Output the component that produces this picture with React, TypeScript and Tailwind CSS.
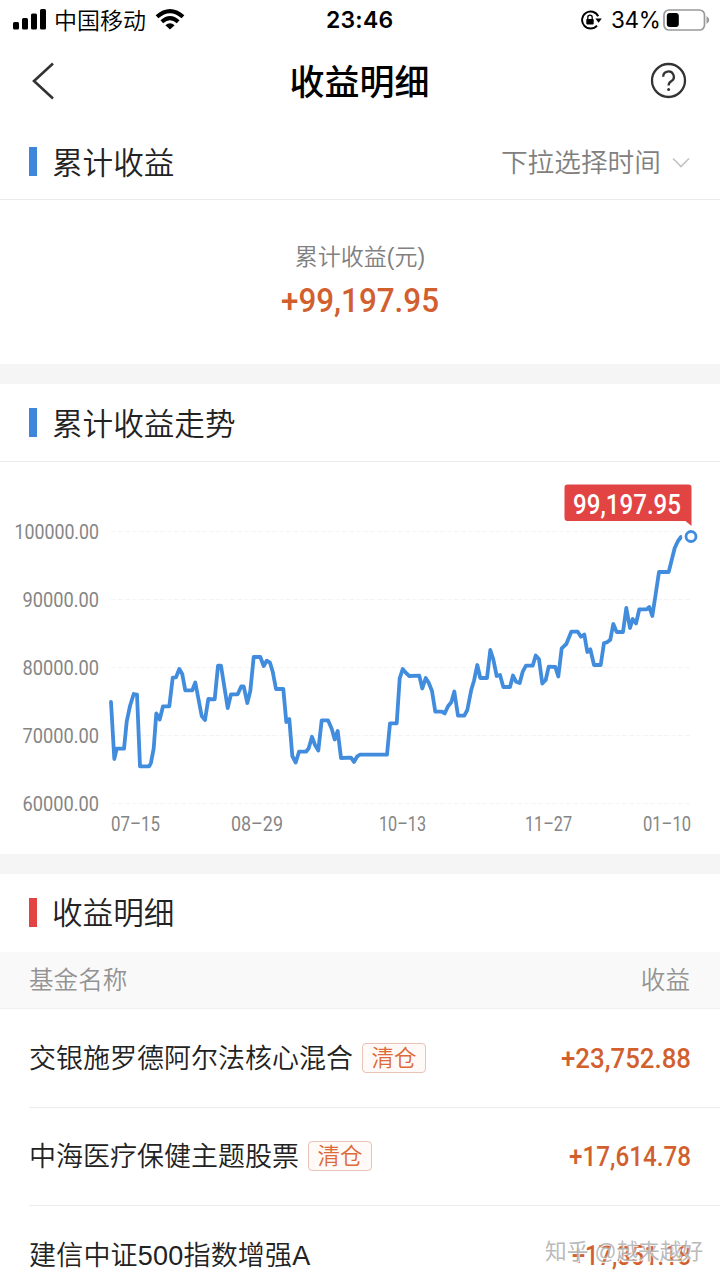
const CJK = "font-['Liberation_Sans','Noto_Sans_CJK_SC',sans-serif]";

const yTicks = [
  { label: "100000.00", y: 531, x: 15 },
  { label: "90000.00", y: 599, x: 23 },
  { label: "80000.00", y: 667, x: 23 },
  { label: "70000.00", y: 735, x: 23 },
  { label: "60000.00", y: 803, x: 23 },
];

const xTicks = [
  { label: "07–15", x: 111, w: 49 },
  { label: "08–29", x: 231, w: 52 },
  { label: "10–13", x: 379, w: 47 },
  { label: "11–27", x: 525, w: 47 },
  { label: "01–10", x: 643, w: 48 },
];

const trend =
  "111,702 114.3,759 116.7,748.7 124,748.7 126.7,721.7 130,706 133.7,694 137,694.7 140,766.3 149.3,766.3 151,762.7 153.7,748.3 156.3,713.3 159.7,719.5 163,706.3 169.3,706.3 172.7,677.7 176,677.3 179.3,669 182.3,674.3 185.3,690.3 192.3,690.3 195.3,682.5 201.7,716 205,720 208.3,699 214.7,699.3 218,665.7 221,665.7 227.7,708 231,694.3 237.7,694.3 241.3,686.3 243.7,686.3 247.3,703 250.3,691 253.7,657 260.3,657 263.7,666 266.7,660.7 270,662.7 272.7,671.7 276,689 283.3,689 286.3,722 289.3,719 292.3,756 295.7,762.5 299,751.7 306,751.7 308.7,748.3 312,736.8 315,745 318.3,750.5 321.7,720.3 328,720.3 331.7,728.7 334.7,739.5 337.7,731 341,758 351,757.7 354,762 357.3,756.3 360,754.7 387,754.7 390,723.3 396.7,723.3 399.7,678.3 402.7,669 405.7,672.7 409.3,676 419.3,675.7 422.3,688.5 425.7,678 428.7,682.7 432,691 435.3,711.7 442,711.7 444.7,713.5 448,706.3 451.3,702.3 454.3,691.5 458,715.7 464.3,715.7 467.3,710 471.3,689.7 474,680.7 477.3,665 480.3,678 487,678 490.3,650 493.3,659.3 496.7,676 500,675 503.3,687 510,687 513,675.5 516,681.7 519.7,683 522.7,671.7 526,665.7 532.7,665.7 535.7,655.5 539,659.3 542.3,683.5 545.7,680 548.7,666.7 555.3,667 558.3,676.5 561.7,648.3 566.3,644 571.3,631.7 577.7,631.7 581,636.7 584.3,634.5 587.3,652 590.3,649.3 594,665 600.7,665 604,643 607,642.3 610.3,639.7 613.3,624 616.7,632 623,632 626.3,608 630,628 632.7,619 636,623.5 639.3,609.3 646.7,609.3 649.3,607 652.3,616 655.7,594 659,572 668.7,572 674.7,548 678,541 681,537";

const funds = [
  { name: "交银施罗德阿尔法核心混合", cleared: true, amount: "+23,752.88", w: 130, tracking: "tracking-normal" },
  { name: "中海医疗保健主题股票", cleared: true, amount: "+17,614.78", w: 122, tracking: "tracking-normal" },
  { name: "建信中证500指数增强A", cleared: false, amount: "+17,351.18", w: 119, tracking: "tracking-[0.2px]" },
];

// Condensed figures, squeezed to a fixed width
function Amount({ value, width, size }: { value: string; width: number; size: number }) {
  return (
    <svg width={width} height={size} className="block overflow-visible">
      <text
        x="0"
        y={size * 0.855}
        fontSize={size}
        textLength={width}
        lengthAdjust="spacingAndGlyphs"
        className="fill-[#d2602f] font-['Roboto',sans-serif] font-medium"
      >
        {value}
      </text>
    </svg>
  );
}

function StatusBar() {
  return (
    <div className="flex h-10 items-center justify-between pl-[13px] pr-[10px] text-black">
      <div className="flex w-[288px] items-center">
        <svg width="33" height="22" viewBox="0 0 33 22">
          <rect x="0" y="13" width="6" height="7.5" rx="1.5" />
          <rect x="9" y="9" width="6" height="11.5" rx="1.5" />
          <rect x="18" y="4.5" width="6" height="16" rx="1.5" />
          <rect x="27" y="0" width="6" height="20.5" rx="1.5" />
        </svg>
        <span className="ml-[8px] pt-[2px] text-[23px] font-[350] leading-none">中国移动</span>
        <svg className="ml-[9px]" width="30" height="22" viewBox="0 0 30 22">
          <g fill="none" stroke="black" strokeWidth="4">
            <path d="M2 7.8Q15-3.6 28 7.8" />
            <path d="M6.8 12.8Q15 5.4 23.2 12.8" />
          </g>
          <path d="M15 20.5L10.4 16.2Q15 12.4 19.6 16.2Z" />
        </svg>
      </div>
      <span className="w-[67px] text-center font-['Inter',sans-serif] text-[23px] font-semibold leading-none tracking-[0.2px]">
        23:46
      </span>
      <div className="flex w-[292px] items-center justify-end">
        <svg width="22" height="20" viewBox="0 0 22 20">
          <path d="M18.2 6.2A8.5 8.5 0 1 0 17 15.6" fill="none" stroke="black" strokeWidth="1.9" />
          <path d="M15.4 8.4H21.8L18.6 12.8Z" />
          <rect x="6.3" y="9" width="7.4" height="5.4" rx="0.8" />
          <path d="M7.8 9.5V7.3A2.2 2.2 0 0 1 12.2 7.3V9.5" fill="none" stroke="black" strokeWidth="1.3" />
        </svg>
        <span className="ml-[9px] w-[49px] whitespace-nowrap font-['Inter',sans-serif] text-[22.5px] leading-none tracking-[-0.4px]">
          34%
        </span>
        <svg className="ml-[3px]" width="47" height="22" viewBox="0 0 47 22">
          <rect x="1" y="1" width="40.5" height="20" rx="5" fill="none" stroke="#999" strokeWidth="1.7" />
          <rect x="3.8" y="4" width="12" height="14" rx="3" />
          <path d="M43.5 7Q49 11 43.5 15Z" fill="#999" />
        </svg>
      </div>
    </div>
  );
}

function SectionTitle({ title, bar }: { title: string; bar: string }) {
  return (
    <div className="flex items-center">
      <span className={`h-[29px] w-2 ${bar}`} />
      <h2 className="ml-[15px] pt-[3px] text-[30.6px] font-[350] leading-none text-[#222]">{title}</h2>
    </div>
  );
}

function TrendChart() {
  return (
    <svg width="720" height="392" viewBox="0 462 720 392" className="block font-['Roboto',sans-serif]">
      {yTicks.map((t) => (
        <g key={t.label}>
          <line x1="111" x2="692" y1={t.y + 0.5} y2={t.y + 0.5} stroke="#f4f4f4" strokeDasharray="5 2" />
          <text
            x={t.x - 0.5}
            y={t.y + 8}
            fontSize="20"
            fill="#858585"
            textLength={99.5 - t.x}
            lengthAdjust="spacingAndGlyphs"
          >
            {t.label}
          </text>
        </g>
      ))}
      {xTicks.map((t) => (
        <text
          key={t.label}
          x={t.x}
          y="831"
          fontSize="19.5"
          fill="#858585"
          textLength={t.w}
          lengthAdjust="spacingAndGlyphs"
        >
          {t.label}
        </text>
      ))}
      <polyline
        points={trend}
        fill="none"
        stroke="#418cdd"
        strokeWidth="3.8"
        strokeLinejoin="round"
        strokeLinecap="round"
      />
      <circle cx="691" cy="536.5" r="9" fill="white" />
      <circle cx="691" cy="536.5" r="5" fill="white" stroke="#418cdd" strokeWidth="2.8" />
      {/* Callout for the latest value */}
      <path
        d="M567.5 484.5H688.5Q691.5 484.5 691.5 487.5V526L685.5 521H567.5Q564.5 521 564.5 518V487.5Q564.5 484.5 567.5 484.5Z"
        fill="#e24343"
      />
      <text
        x="573"
        y="513.5"
        fontSize="27"
        fill="white"
        textLength="108"
        lengthAdjust="spacingAndGlyphs"
        className="font-medium"
      >
        99,197.95
      </text>
    </svg>
  );
}

export default function App() {
  return (
    <div className={`relative h-[1281px] w-[720px] overflow-hidden bg-white ${CJK}`}>
      <StatusBar />

      <header className="flex h-[84px] items-center justify-between pb-[3px] pl-[31px] pr-[33px]">
        <svg width="40" height="38" viewBox="0 0 40 38" fill="none" stroke="#333" strokeWidth="2.6">
          <path d="M22 1.5L3 19L22 36.5" />
        </svg>
        <h1 className="mr-[2px] pt-[3px] text-[35px] font-medium leading-none text-black">收益明细</h1>
        <svg width="37" height="37" viewBox="0 0 37 37" fill="none" stroke="#333" strokeWidth="2.3">
          <circle cx="18.5" cy="18.5" r="16.5" />
          <path d="M13.2 14.8A5.3 5.3 0 1 1 21.2 19.3Q18.6 20.8 18.6 23.6" />
          <circle cx="18.6" cy="27.4" r="1.5" fill="#333" stroke="none" />
        </svg>
      </header>

      <section>
        <div className="flex h-[76px] items-center justify-between border-b border-[#ebebeb] pl-[29px] pr-[30px]">
          <SectionTitle title="累计收益" bar="bg-[#3d87db]" />
          <button className="flex items-center pt-[3px] text-[26.7px] font-[350] leading-none text-[#808080]">
            下拉选择时间
            <svg className="ml-[11px]" width="18" height="12" viewBox="0 0 18 12" fill="none" stroke="#c4c4c4" strokeWidth="1.7">
              <path d="M1 1.5L9 9.5L17 1.5" />
            </svg>
          </button>
        </div>
        <div className="flex h-[164px] flex-col items-center pt-[46px]">
          <p className="text-[23px] font-[350] leading-none text-[#808080]">累计收益(元)</p>
          <div className="mt-[14px]">
            <Amount value="+99,197.95" width={158} size={34} />
          </div>
        </div>
      </section>

      <div className="h-5 bg-[#f5f5f5]" />

      <section>
        <div className="flex h-[78px] items-center border-b border-[#ebebeb] pl-[29px]">
          <SectionTitle title="累计收益走势" bar="bg-[#3d87db]" />
        </div>
        <TrendChart />
      </section>

      <div className="h-5 bg-[#f5f5f5]" />

      <section>
        <div className="flex h-[78px] items-center pb-[2px] pl-[29px]">
          <SectionTitle title="收益明细" bar="bg-[#e24343]" />
        </div>
        <div className="flex h-[57px] items-center justify-between border-b border-[#f0f0f0] bg-[#f9f9f9] pl-[29px] pr-[30px] pt-[3px] text-[24.6px] font-[350] leading-none text-[#939393]">
          <span>基金名称</span>
          <span>收益</span>
        </div>
        <ul className="pl-[29px]">
          {funds.map((f) => (
            <li key={f.name} className="flex h-[98.5px] items-center justify-between border-b border-[#ececec] pr-[29px]">
              <div className="flex items-center">
                <span className={`pt-[3px] text-[27px] font-[350] leading-none text-[#222] ${f.tracking}`}>{f.name}</span>
                {f.cleared && (
                  <span className="ml-[9px] flex h-[30px] w-16 items-center justify-center rounded border border-[#e8c3b5] bg-[#fffaf7] pt-[2px] text-[22.5px] font-[350] leading-none text-[#dc6a38]">
                    清仓
                  </span>
                )}
              </div>
              <Amount value={f.amount} width={f.w} size={28} />
            </li>
          ))}
        </ul>
      </section>

      <p className="absolute left-[545px] top-[1241px] whitespace-nowrap text-[21.7px] leading-none text-[#a8a8a8]/80 [text-shadow:1px_1px_1px_white]">
        知乎 @越来越好
      </p>
    </div>
  );
}
